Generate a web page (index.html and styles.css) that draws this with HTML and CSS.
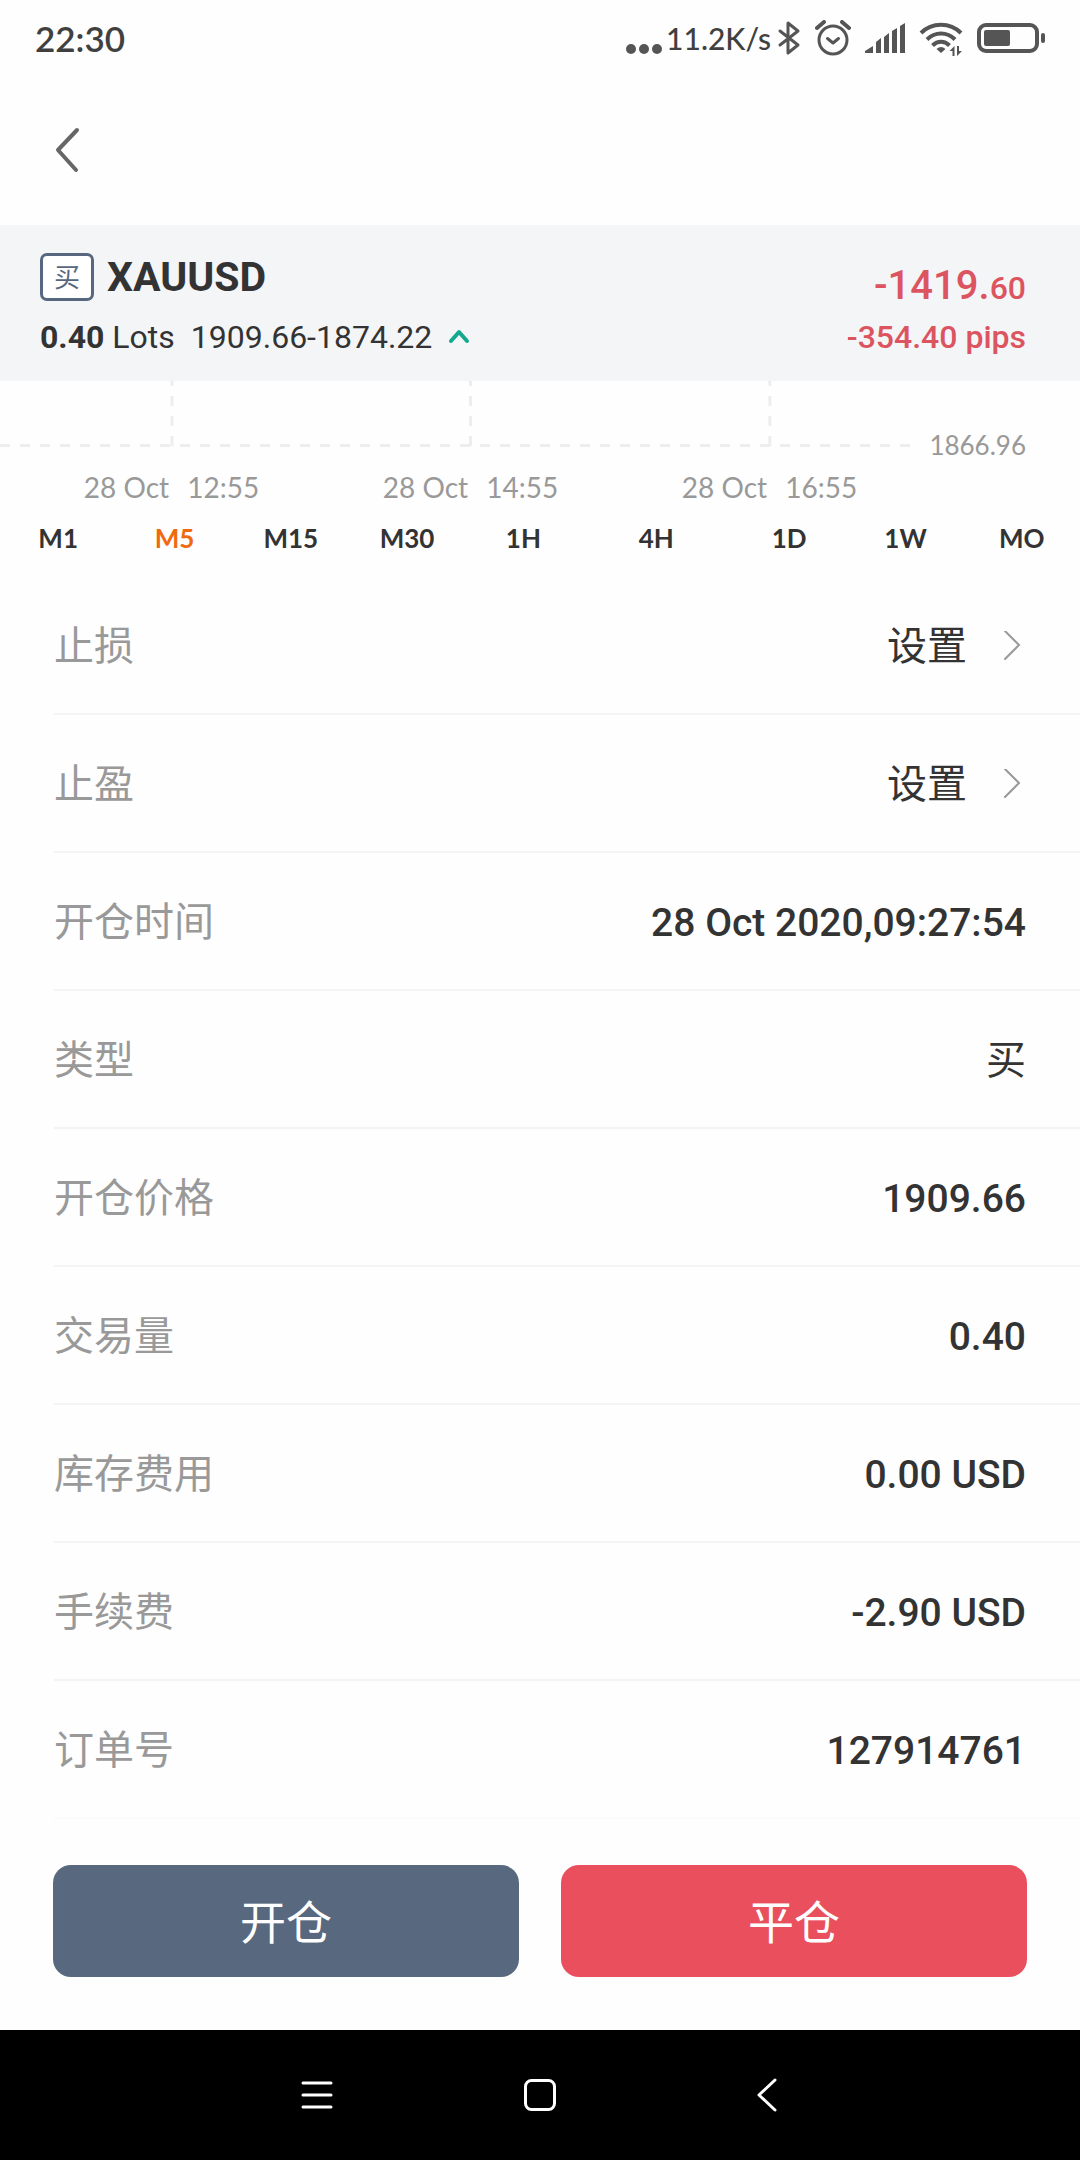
FILE: index.html
```html
<!DOCTYPE html>
<html lang="zh-CN">
<head>
  <meta charset="utf-8">
  <meta name="viewport" content="width=device-width, initial-scale=1">
  <title>XAUUSD</title>
  <link rel="stylesheet" href="styles.css">
</head>
<body>
  <header class="status">
    <time class="status-time">22:30</time>
    <div class="status-icons">
      <svg width="36" height="36" viewBox="0 0 36 36" fill="#555"><circle cx="5" cy="29" r="5"/><circle cx="18" cy="29" r="5"/><circle cx="31" cy="29" r="5"/></svg>
      <span class="status-speed">11.2K/s</span>
      <svg class="bluetooth" width="24" height="36" viewBox="0 0 24 36" fill="none" stroke="#555" stroke-width="3" stroke-linejoin="round" stroke-linecap="round"><path d="M3 11l18 14-10 8V3l10 8L3 25"/></svg>
      <svg class="alarm" width="36" height="36" viewBox="0 0 36 36" fill="none" stroke="#555" stroke-width="3" stroke-linecap="round" stroke-linejoin="round"><circle cx="18" cy="20" r="14"/><path d="M12.500 18.500l5.500 4.500 5.500-4.500"/><path d="M2 8l7-6M34 8l-7-6" stroke-width="4"/></svg>
      <svg class="signal" width="40" height="36" viewBox="0 0 40 36" fill="#555"><path d="M0 33v-2l8-5v7zM11 33V22l5-4v15zM19 33V17l5-4v20zM27 33V11l5-3v25zM35 33V6l5-3v30z"/></svg>
      <svg class="wifi" width="44" height="36" viewBox="0 0 44 36" fill="none" stroke="#555" stroke-width="4"><path d="M2 13C13 2 31 2 42 13M8 19.500c8-8 20-8 28 0M13.500 25.500c5-5 12-5 17 0"/><path d="M22 33l-4.500-4q4.500-4 9 0z" fill="#555" stroke="none"/><path d="M35.500 36V26l-5 5h3v5zM38 26v10l5-5h-3v-5z" fill="#555" stroke="none"/></svg>
      <svg class="battery" width="68" height="36" viewBox="0 0 68 36"><rect x="2" y="5" width="58" height="26" rx="7" fill="none" stroke="#555" stroke-width="4"/><rect x="7" y="10" width="26" height="16" rx="2" fill="#555"/><rect x="64" y="13" width="4" height="10" rx="2" fill="#555"/></svg>
    </div>
  </header>

  <nav class="topbar">
    <button class="back" type="button" aria-label="返回">
      <svg width="26" height="46" viewBox="0 0 26 46" fill="none" stroke="#666" stroke-width="4" stroke-linecap="round" stroke-linejoin="round"><path d="M23 3L4 23l18 20"/></svg>
    </button>
  </nav>

  <main class="main">
    <section class="summary">
      <div class="summary-left">
        <div class="symbol-line">
          <span class="side">买</span>
          <h1 class="symbol">XAUUSD</h1>
        </div>
        <div class="lots-line">
          <span><strong>0.40</strong> Lots</span>
          <span>1909.66-1874.22</span>
          <svg class="trend" width="22" height="16" viewBox="0 0 22 16" fill="none" stroke="#12a98f" stroke-width="4" stroke-linecap="round" stroke-linejoin="round"><path d="M3 12l8-9 8 9"/></svg>
        </div>
      </div>
      <div class="summary-right">
        <div class="profit">-1419.<small>60</small></div>
        <div class="pips">-354.40 pips</div>
      </div>
    </section>

    <section class="chart">
      <div class="plot">
        <svg class="grid-lines" width="100%" height="66" fill="none" stroke="#ededee" stroke-width="3" stroke-dasharray="10 10">
          <path d="M0 64.500H4000"/>
          <line x1="18.900%" x2="18.900%" y1="-5" y2="66"/>
          <line x1="51.700%" x2="51.700%" y1="-5" y2="66"/>
          <line x1="84.600%" x2="84.600%" y1="-5" y2="66"/>
        </svg>
        <span class="price">1866.96</span>
      </div>
      <div class="times">
        <div class="time"><span>28 Oct</span><span>12:55</span></div>
        <div class="time"><span>28 Oct</span><span>14:55</span></div>
        <div class="time"><span>28 Oct</span><span>16:55</span></div>
      </div>
      <div class="periods">
        <button type="button">M1</button>
        <button type="button" class="active">M5</button>
        <button type="button">M15</button>
        <button type="button">M30</button>
        <button type="button">1H</button>
        <button type="button">4H</button>
        <button type="button">1D</button>
        <button type="button">1W</button>
        <button type="button">MO</button>
      </div>
    </section>

    <dl class="details">
      <div class="row"><dt>止损</dt><dd><button class="set" type="button">设置<svg width="18" height="32" viewBox="0 0 18 32" fill="none" stroke="#999" stroke-width="2" stroke-linecap="round"><path d="M2 0l14 14L2 28"/></svg></button></dd></div>
      <div class="row"><dt>止盈</dt><dd><button class="set" type="button">设置<svg width="18" height="32" viewBox="0 0 18 32" fill="none" stroke="#999" stroke-width="2" stroke-linecap="round"><path d="M2 0l14 14L2 28"/></svg></button></dd></div>
      <div class="row"><dt>开仓时间</dt><dd>28 Oct 2020,09:27:54</dd></div>
      <div class="row"><dt>类型</dt><dd class="cjk">买</dd></div>
      <div class="row"><dt>开仓价格</dt><dd>1909.66</dd></div>
      <div class="row"><dt>交易量</dt><dd>0.40</dd></div>
      <div class="row"><dt>库存费用</dt><dd>0.00 USD</dd></div>
      <div class="row"><dt>手续费</dt><dd>-2.90 USD</dd></div>
      <div class="row"><dt>订单号</dt><dd>127914761</dd></div>
    </dl>
  </main>

  <div class="actions">
    <button class="action open" type="button">开仓</button>
    <button class="action close" type="button">平仓</button>
  </div>

  <footer class="sysnav">
    <button type="button" aria-label="菜单"><svg width="40" height="40" viewBox="0 0 40 40" fill="none" stroke="#fff" stroke-width="3" stroke-linecap="round"><path d="M6 8h28M6 20h28M6 32h28"/></svg></button>
    <button type="button" aria-label="主页"><svg width="40" height="40" viewBox="0 0 40 40" fill="none" stroke="#fff" stroke-width="3"><rect x="5.500" y="5.500" width="29" height="29" rx="6"/></svg></button>
    <button type="button" aria-label="后退"><svg width="40" height="40" viewBox="0 0 40 40" fill="none" stroke="#fff" stroke-width="3" stroke-linecap="round" stroke-linejoin="round"><path d="M32 5L16 20l16 15"/></svg></button>
  </footer>
</body>
</html>
```
FILE: styles.css
```css
* {
  box-sizing: border-box;
}

body {
  margin: 0;
  min-height: 100vh;
  display: flex;
  flex-direction: column;
  background: #fefefe;
  color: #333;
  font-family: Roboto, "Noto Sans CJK SC", sans-serif;
  font-size: 40px;
  line-height: 48px;
}

button {
  margin: 0;
  padding: 0;
  border: 0;
  background: none;
  color: inherit;
  font: inherit;
  cursor: pointer;
}

svg {
  display: block;
  flex: none;
}

/* Status bar */
.status {
  display: flex;
  justify-content: space-between;
  align-items: center;
  padding: 14px 35px 18px;
  font-family: Lato, sans-serif;
  color: #404040;
}

.status-time {
  font-size: 35px;
  font-weight: 600;
}

.status-icons {
  display: flex;
  align-items: center;
}

.status-speed {
  margin-left: 4px;
  font-size: 30px;
  font-weight: 500;
}

.bluetooth {
  margin-left: 6px;
}

.alarm,
.signal,
.wifi,
.battery {
  margin-left: 14px;
}

/* Top bar */
.topbar {
  padding: 47px 54px 52px;
}

.back {
  display: block;
}

/* Position summary */
.summary {
  display: flex;
  justify-content: space-between;
  padding: 28px 54px 24px 40px;
  background: #f4f5f7;
}

.symbol-line {
  display: flex;
  align-items: center;
  gap: 13px;
}

.side {
  width: 54px;
  height: 48px;
  border: 3px solid #57677f;
  border-radius: 7px;
  background: #fff;
  color: #57677f;
  font-size: 26px;
  line-height: 44px;
  text-align: center;
}

.symbol {
  margin: 0;
  font-size: 41px;
  font-weight: 700;
}

.lots-line {
  display: flex;
  align-items: center;
  gap: 16px;
  margin-top: 16px;
  font-size: 32px;
  line-height: 40px;
}

.summary-right {
  padding-top: 9px;
  color: #dc545f;
  text-align: right;
  font-weight: 500;
}

.profit small {
  font-size: 32px;
}

.pips {
  margin-top: 5px;
  font-size: 32px;
  line-height: 40px;
}

/* Chart */
.chart {
  padding-bottom: 19px;
  font-family: Lato, sans-serif;
}

.plot {
  display: grid;
  grid-template-columns: 1fr 170px;
  height: 80px;
}

.price {
  align-self: end;
  padding-right: 54px;
  text-align: right;
}

.price,
.times {
  color: #999;
  font-size: 28px;
  line-height: 32px;
}

.price {
  font-size: 26px;
}

.times {
  display: grid;
  grid-template-columns: repeat(3, 1fr);
  margin-top: 10px;
  padding: 0 161px 0 22px;
}

.time {
  display: flex;
  justify-content: center;
  gap: 18px;
}

.periods {
  display: grid;
  grid-template-columns: repeat(5, 7fr) 9fr repeat(3, 7fr);
  margin-top: 15px;
  font-size: 26px;
  font-weight: 700;
  line-height: 40px;
}

.periods .active {
  color: #f0690f;
}

/* Order details */
.details {
  margin: 0 0 0 54px;
}

.row {
  display: flex;
  justify-content: space-between;
  align-items: center;
  min-height: 138px;
  padding: 4px 54px 0 0;
  border-bottom: 2px solid #f4f4f4;
}

.row:last-child {
  border-color: #fbfbfb;
}

.row dt {
  color: #999;
}

.row dd {
  margin: 0;
  font-size: 39px;
  font-weight: 500;
}

.row .cjk,
.set {
  font-size: 40px;
  font-weight: 400;
}

.set {
  display: flex;
  align-items: center;
  gap: 36px;
  padding-right: 5px;
}

/* Actions */
.actions {
  display: grid;
  grid-template-columns: 1fr 1fr;
  gap: 42px;
  margin-top: auto;
  padding: 46px 53px 53px;
}

.action {
  padding: 34px 0 30px;
  border-radius: 18px;
  color: #fff;
  font-size: 46px;
}

.open {
  background: #57687f;
}

.close {
  background: #ea4f5d;
}

/* System navigation */
.sysnav {
  display: grid;
  grid-template-columns: repeat(3, 1fr);
  padding: 45px 19%;
  background: #000;
}

.sysnav button {
  justify-self: center;
}
```
